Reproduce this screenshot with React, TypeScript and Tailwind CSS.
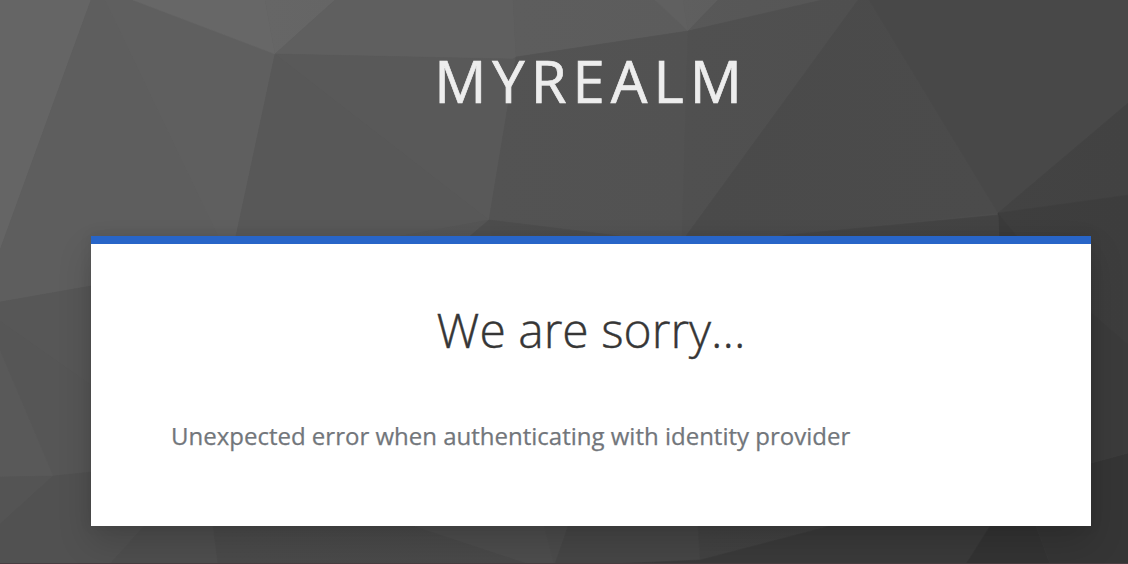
import React from 'react';

interface Facet {
  points: string;
  from: string;
  to: string;
}

// Each facet is shaded from its left edge to its right edge
const facets: Facet[] = [
  { points: '0,0 91,0 0,250', from: '#656565', to: '#656565' },
  { points: '91,0 105,0 218,236 218,286 91,286 0,302 0,250', from: '#5e5e5e', to: '#5e5e5e' },
  { points: '105,0 133,0 275,54 236,236 218,236', from: '#5f5f5f', to: '#5f5f5f' },
  { points: '133,0 265,0 275,54', from: '#676767', to: '#676767' },
  { points: '265,0 335,0 275,54', from: '#666666', to: '#656565' },
  { points: '335,0 513,0 516,57 513,59 275,54', from: '#5f5f5f', to: '#5f5f5f' },
  { points: '275,54 513,59 516,57 489,220', from: '#595959', to: '#595959' },
  { points: '275,54 489,220 400,236 236,236', from: '#585858', to: '#585858' },
  { points: '513,0 655,0 688,31 516,57', from: '#5d5d5d', to: '#5c5c5c' },
  { points: '655,0 683,0 688,31', from: '#606060', to: '#606060' },
  { points: '683,0 718,0 688,31', from: '#5f5f5f', to: '#5e5e5e' },
  { points: '718,0 822,0 688,31', from: '#585858', to: '#565656' },
  { points: '516,57 688,31 682,236 620,236 489,220', from: '#535353', to: '#525252' },
  { points: '688,31 822,0 858,0 686,236 682,236', from: '#505050', to: '#4f4f4f' },
  { points: '858,0 869,0 998,213 786,235 686,236', from: '#4a4a4a', to: '#4b4b4b' },
  { points: '869,0 1128,0 1128,103 998,213', from: '#484848', to: '#484848' },
  { points: '998,213 1128,103 1128,195', from: '#434343', to: '#424242' },
  { points: '998,213 1128,195 1128,344 1091,312 1017,236', from: '#3e3e3e', to: '#3d3d3d' },
  { points: '998,213 1017,236 999,236', from: '#3b3b3b', to: '#3b3b3b' },
  { points: '998,215 999,240 760,240 786,235', from: '#454545', to: '#434343' },
  { points: '489,220 400,236 400,240 470,240 470,236', from: '#565656', to: '#555555' },
  { points: '489,220 470,236 470,240 492,240', from: '#4e4e4e', to: '#4e4e4e' },
  { points: '489,220 492,240 620,240 620,236', from: '#4d4d4d', to: '#4c4c4c' },
  { points: '0,302 91,286 91,385 0,321', from: '#575757', to: '#575757' },
  { points: '0,321 91,385 91,472 53,476 0,351', from: '#565656', to: '#565656' },
  { points: '0,351 53,476 0,477', from: '#595959', to: '#595959' },
  { points: '0,477 53,476 0,524', from: '#545454', to: '#545454' },
  { points: '0,524 53,476 91,472 144,526 110,564 0,564', from: '#515151', to: '#515151' },
  { points: '144,526 213,526 218,564 110,564', from: '#4e4e4e', to: '#4e4e4e' },
  { points: '213,526 415,526 530,564 218,564', from: '#4a4a4a', to: '#494949' },
  { points: '415,526 544,526 554,564 530,564', from: '#4d4d4d', to: '#4d4d4d' },
  { points: '544,526 568,526 555,564 554,564', from: '#4b4b4b', to: '#4b4b4b' },
  { points: '568,526 698,526 700,560 610,564 555,564', from: '#464646', to: '#464646' },
  { points: '698,526 830,526 700,560', from: '#424242', to: '#414141' },
  { points: '830,526 990,526 966,564 610,564 700,560', from: '#3a3a3a', to: '#3a3a3a' },
  { points: '990,526 1036,526 1050,564 966,564', from: '#333333', to: '#333333' },
  { points: '1036,526 1091,463 1128,453 1128,564 1050,564', from: '#353535', to: '#353535' },
  { points: '1091,312 1128,344 1128,453 1091,463', from: '#3b3b3b', to: '#3b3b3b' },
];

const Background: React.FC = () => (
  <svg
    className="absolute inset-0 h-full w-full"
    viewBox="0 0 1128 564"
    preserveAspectRatio="none"
    aria-hidden="true"
  >
    <defs>
      {facets.map((facet, i) => (
        <linearGradient key={i} id={`facet-${i}`}>
          <stop offset="0" stopColor={facet.from} />
          <stop offset="1" stopColor={facet.to} />
        </linearGradient>
      ))}
    </defs>
    {facets.map((facet, i) => (
      <polygon
        key={i}
        points={facet.points}
        fill={`url(#facet-${i})`}
        stroke={`url(#facet-${i})`}
        strokeWidth="0.6"
      />
    ))}
  </svg>
);

const App: React.FC = () => {
  return (
    <div className="relative h-[564px] w-[1128px] overflow-hidden bg-[#4d4d4d] font-['Open_Sans',sans-serif]">
      <Background />
      <div className="relative flex h-full flex-col border-b border-[#483d41] pl-[91px] pr-[37px]">
        <header className="flex h-[236px] shrink-0 justify-center pt-[39px]">
          <div className="whitespace-nowrap text-[58px] leading-[84px] tracking-[6px] text-[#ededed] uppercase [-webkit-text-stroke:0.7px_#ededed]">
            myrealm
          </div>
        </header>
        <main className="h-[290px] shrink-0 border-t-8 border-[#2865c8] bg-white px-20 shadow-[0_16px_32px_0_rgba(3,3,3,0.16),0_0_12px_0_rgba(3,3,3,0.08)]">
          <h1 className="pt-[55px] text-center text-5xl font-light leading-[62px] text-[#363636] [-webkit-text-stroke:0.4px_#363636]">
            We are sorry...
          </h1>
          <p className="pt-[57px] text-2xl leading-9 text-[#72767b] [-webkit-text-stroke:0.25px_#72767b]">
            Unexpected error when authenticating with identity provider
          </p>
        </main>
      </div>
    </div>
  );
};

export default App;
